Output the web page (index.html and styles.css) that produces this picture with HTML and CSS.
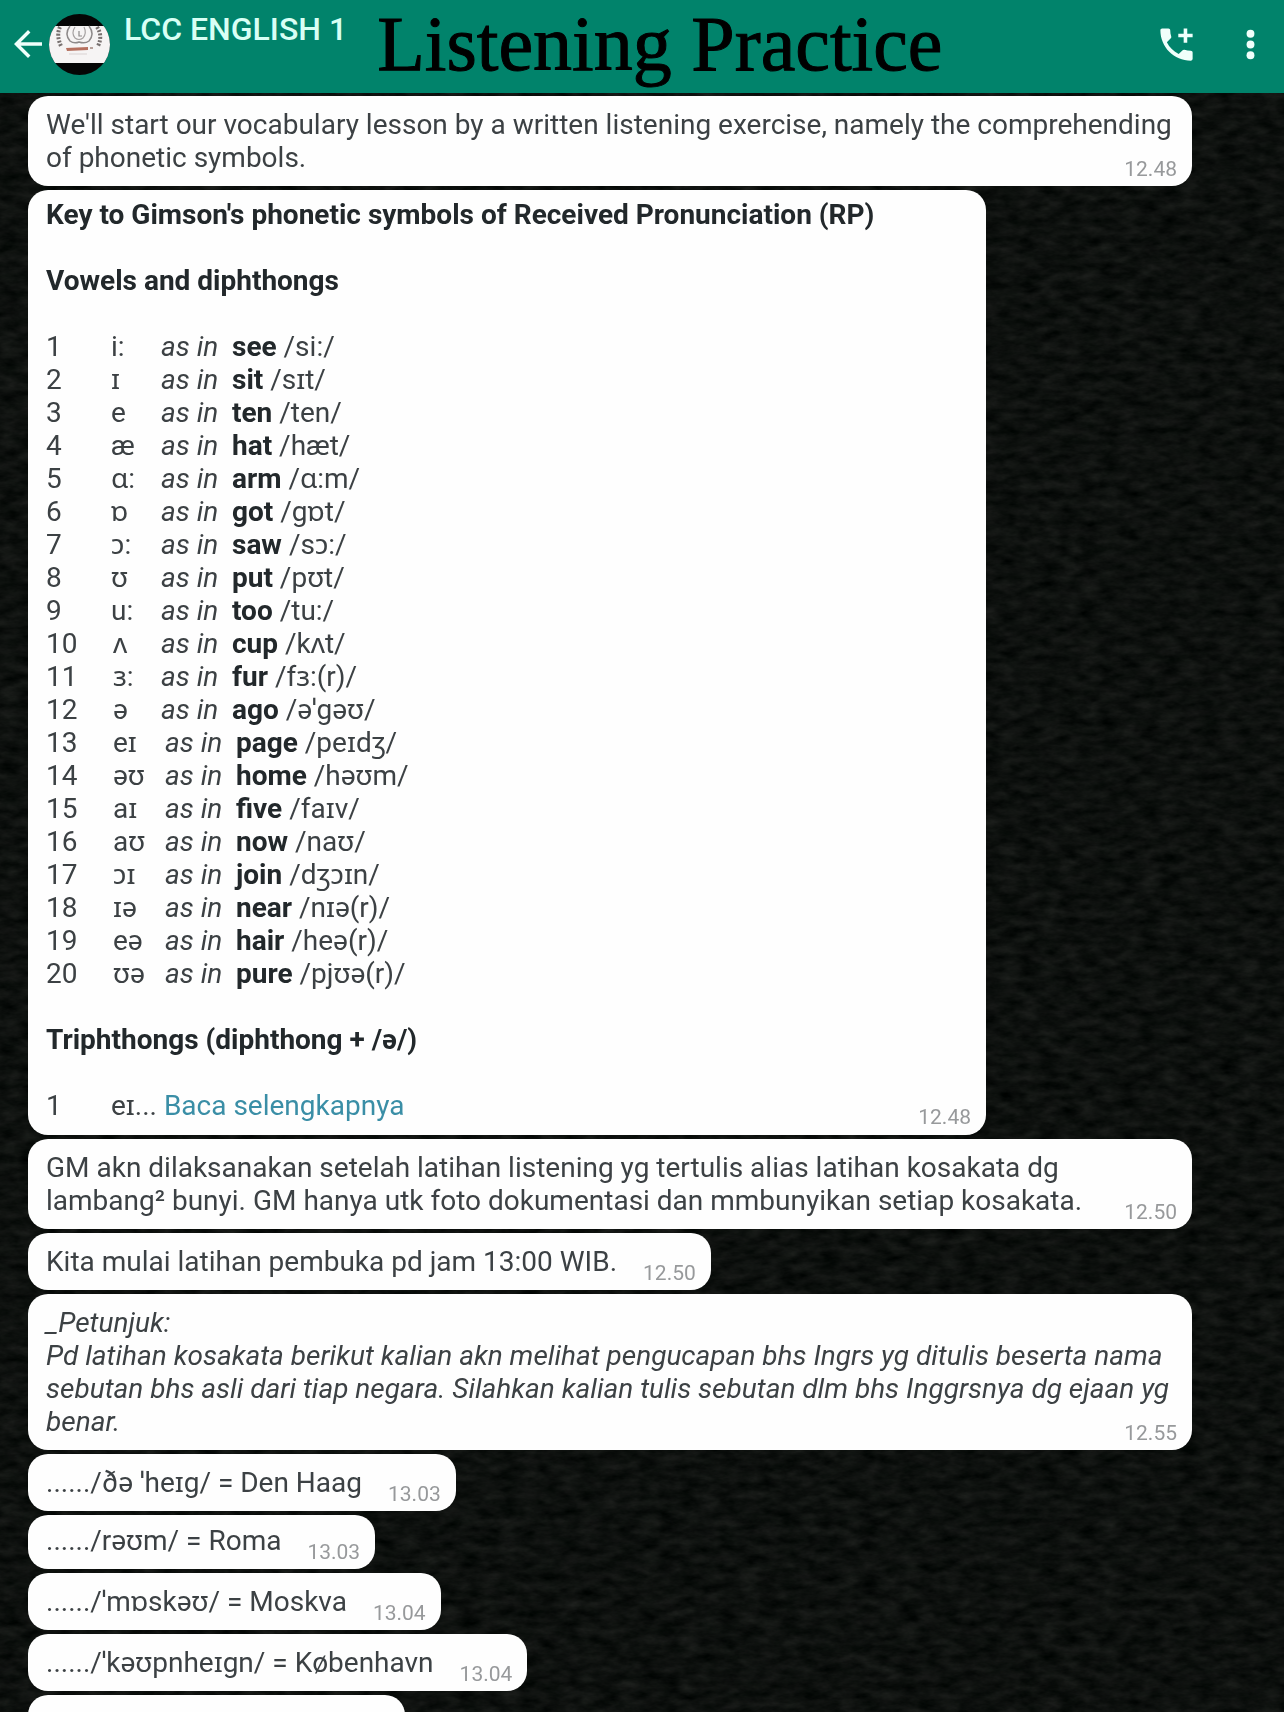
FILE: index.html
```
<!DOCTYPE html>
<html lang="id">
<head>
<meta charset="utf-8">
<title>Listening Practice</title>
<meta name="viewport" content="width=device-width, initial-scale=1">
<link rel="stylesheet" href="styles.css">
</head>
<body>
<svg class="wallpaper" aria-hidden="true">
  <filter id="grain" x="0" y="0" width="100%" height="100%" color-interpolation-filters="sRGB">
    <feTurbulence type="fractalNoise" baseFrequency="0.05 0.11" numOctaves="4" seed="8"/>
    <feColorMatrix values="0.13 0.03 0 0 -0.028  0.12 0.04 0 0 -0.016  0.12 0.03 0 0 -0.02  0 0 0 0 1"/>
  </filter>
  <rect width="100%" height="100%" filter="url(#grain)"/>
</svg>

<header class="bar">
  <button class="icon-btn back" aria-label="Kembali">
    <svg viewBox="0 0 24 24"><path d="M20 11H7.800l5.600-5.600L12 4l-8 8 8 8 1.400-1.400L7.800 13H20z"/></svg>
  </button>
  <svg class="avatar" viewBox="0 0 61 61" aria-hidden="true">
    <defs><clipPath id="disc"><circle cx="30.500" cy="30.500" r="30.500"/></clipPath></defs>
    <g clip-path="url(#disc)">
      <rect width="61" height="61" fill="#050505"/>
      <rect y="12" width="61" height="37" fill="#f6f4f4"/>
      <g fill="none" stroke="#8d8989">
        <path d="M21 12q-6 8 0 15 4 3 9 1 6 2 10-1 6-7 0-15" stroke-width="1.500"/>
        <path d="M26 13q-4 6 0 11 4 3 8 0 4-5 1-11" stroke="#a5a1a1" stroke-width="1.200"/>
        <path d="M30 17v5h3" stroke-width="1.200"/>
        <path d="M11 13q-4 8 1 19" stroke="#77706f" stroke-width="4" stroke-dasharray="2 1.500"/>
        <path d="M48 13q6 9 1 19" stroke="#77706f" stroke-width="4" stroke-dasharray="2 1.500"/>
      </g>
      <path d="M17 34l22-1v3l-21 1z" fill="#b5705f"/>
      <path d="M41 34h3" stroke="#b5a09a" stroke-width="2"/>
      <path d="M20 40h18" stroke="#d9d2d2"/>
    </g>
  </svg>
  <h2 class="group">LCC ENGLISH 1</h2>
  <h1 class="title">Listening Practice</h1>
  <div class="actions">
    <button class="icon-btn" aria-label="Panggilan grup">
      <svg viewBox="0 0 24 24"><path d="M20 15.500c-1.250 0-2.450-.2-3.570-.57-.1-.03-.21-.05-.31-.05-.26 0-.51.1-.71.29l-2.200 2.200c-2.830-1.440-5.150-3.750-6.590-6.590l2.200-2.210c.28-.26.36-.65.25-1C8.700 6.450 8.500 5.250 8.500 4c0-.55-.45-1-1-1H4c-.55 0-1 .45-1 1 0 9.390 7.610 17 17 17 .55 0 1-.45 1-1v-3.500c0-.55-.45-1-1-1zM21 6h-3V3h-2v3h-3v2h3v3h2V8h3z"/></svg>
    </button>
    <button class="icon-btn" aria-label="Menu">
      <svg viewBox="0 0 24 24"><circle cx="12" cy="6" r="2.200"/><circle cx="12" cy="12" r="2.200"/><circle cx="12" cy="18" r="2.200"/></svg>
    </button>
  </div>
</header>

<main class="chat">
  <article class="bubble wide">
    <p>We'll start our vocabulary lesson by a written listening exercise, namely the comprehending of phonetic symbols.</p>
    <time>12.48</time>
  </article>

  <article class="bubble key">
    <div>
      <h3>Key to Gimson's phonetic symbols of Received Pronunciation (RP)</h3>
      <h3>Vowels and diphthongs</h3>
      <table>
        <tbody>
          <tr><td>1</td><td>i:</td><td><i>as in</i></td><td><b>see</b> /si:/</td></tr>
          <tr><td>2</td><td>ɪ</td><td><i>as in</i></td><td><b>sit</b> /sɪt/</td></tr>
          <tr><td>3</td><td>e</td><td><i>as in</i></td><td><b>ten</b> /ten/</td></tr>
          <tr><td>4</td><td>æ</td><td><i>as in</i></td><td><b>hat</b> /hæt/</td></tr>
          <tr><td>5</td><td>ɑ:</td><td><i>as in</i></td><td><b>arm</b> /ɑ:m/</td></tr>
          <tr><td>6</td><td>ɒ</td><td><i>as in</i></td><td><b>got</b> /gɒt/</td></tr>
          <tr><td>7</td><td>ɔ:</td><td><i>as in</i></td><td><b>saw</b> /sɔ:/</td></tr>
          <tr><td>8</td><td>ʊ</td><td><i>as in</i></td><td><b>put</b> /pʊt/</td></tr>
          <tr><td>9</td><td>u:</td><td><i>as in</i></td><td><b>too</b> /tu:/</td></tr>
          <tr><td>10</td><td>ʌ</td><td><i>as in</i></td><td><b>cup</b> /kʌt/</td></tr>
          <tr><td>11</td><td>ɜ:</td><td><i>as in</i></td><td><b>fur</b> /fɜ:(r)/</td></tr>
          <tr><td>12</td><td>ə</td><td><i>as in</i></td><td><b>ago</b> /əˈgəʊ/</td></tr>
        </tbody>
      </table>
      <table class="diphthongs">
        <tbody>
          <tr><td>13</td><td>eɪ</td><td><i>as in</i></td><td><b>page</b> /peɪdʒ/</td></tr>
          <tr><td>14</td><td>əʊ</td><td><i>as in</i></td><td><b>home</b> /həʊm/</td></tr>
          <tr><td>15</td><td>aɪ</td><td><i>as in</i></td><td><b>five</b> /faɪv/</td></tr>
          <tr><td>16</td><td>aʊ</td><td><i>as in</i></td><td><b>now</b> /naʊ/</td></tr>
          <tr><td>17</td><td>ɔɪ</td><td><i>as in</i></td><td><b>join</b> /dʒɔɪn/</td></tr>
          <tr><td>18</td><td>ɪə</td><td><i>as in</i></td><td><b>near</b> /nɪə(r)/</td></tr>
          <tr><td>19</td><td>eə</td><td><i>as in</i></td><td><b>hair</b> /heə(r)/</td></tr>
          <tr><td>20</td><td>ʊə</td><td><i>as in</i></td><td><b>pure</b> /pjʊə(r)/</td></tr>
        </tbody>
      </table>
      <h3 class="spaced">Triphthongs (diphthong + /ə/)</h3>
      <p class="entry"><span class="num">1</span><span>eɪ... <a href="#more">Baca selengkapnya</a></span></p>
    </div>
    <time>12.48</time>
  </article>

  <article class="bubble wide">
    <p>GM akn dilaksanakan setelah latihan listening yg tertulis alias latihan kosakata dg<br>lambang² bunyi. GM hanya utk foto dokumentasi dan mmbunyikan setiap kosakata.</p>
    <time>12.50</time>
  </article>

  <article class="bubble short">
    <p>Kita mulai latihan pembuka pd jam 13:00 WIB.</p>
    <time>12.50</time>
  </article>

  <article class="bubble wide">
    <p><i>_Petunjuk:<br>Pd latihan kosakata berikut kalian akn melihat pengucapan bhs Ingrs yg ditulis beserta nama sebutan bhs asli dari tiap negara. Silahkan kalian tulis sebutan dlm bhs Inggrsnya dg ejaan yg benar.</i></p>
    <time>12.55</time>
  </article>

  <article class="bubble short">
    <p>....../ðə ˈheɪg/ = Den Haag</p>
    <time>13.03</time>
  </article>
  <article class="bubble short tight">
    <p>....../rəʊm/ = Roma</p>
    <time>13.03</time>
  </article>
  <article class="bubble short">
    <p>....../ˈmɒskəʊ/ = Moskva</p>
    <time>13.04</time>
  </article>
  <article class="bubble short">
    <p>....../ˈkəʊpnheɪgn/ = København</p>
    <time>13.04</time>
  </article>
  <article class="bubble next"></article>
</main>
</body>
</html>
```
FILE: styles.css
```
* {
  box-sizing: border-box;
}

body {
  margin: 0;
  height: 100vh;
  overflow: hidden;
  background: #0c100f;
  color: #3c4144;
  font: 28px/33px Roboto, "Noto Sans", "DejaVu Sans", sans-serif;
}

h1, h2, h3, p {
  margin: 0;
}

/* Grainy dark chat wallpaper behind everything */
.wallpaper {
  position: fixed;
  inset: 0;
  width: 100%;
  height: 100%;
  z-index: -1;
}

/* Top bar */
.bar {
  display: flex;
  align-items: center;
  height: 93px;
  padding: 0 12px 5px 7px;
  background: #01836b;
}

.icon-btn {
  padding: 0;
  border: 0;
  background: none;
  color: #f0fffb;
}

.icon-btn svg {
  display: block;
  width: 43px;
  height: 43px;
  fill: currentColor;
}

.back svg {
  width: 42px;
  height: 42px;
}

.avatar {
  flex: none;
  width: 61px;
  height: 61px;
}

.group {
  align-self: flex-start;
  margin: 10px 30px 0 14px;
  color: #d8fff5;
  font-size: 32px;
  line-height: 38px;
  font-weight: 500;
  white-space: nowrap;
}

.title {
  color: #000;
  font: 78px/86px "Liberation Serif", serif;
  -webkit-text-stroke: 1px #000;
  white-space: nowrap;
}

.actions {
  display: flex;
  gap: 31px;
  margin-left: auto;
}

/* Messages */
.chat {
  display: flex;
  flex-direction: column;
  align-items: flex-start;
  gap: 4px;
  padding: 3px 92px 0 28px;
}

.bubble {
  flex: none;
  max-width: 100%;
  padding: 12px 15px 12px 18px;
  border-radius: 20px;
  background: #fefefe;
}

.wide, .key {
  display: grid;
  width: 100%;
}

.wide > *, .key > * {
  grid-area: 1 / 1;
}

.key {
  max-width: 958px;
  padding-top: 8px;
  padding-bottom: 13px;
}

.short {
  display: flex;
  gap: 26px;
}

.tight {
  padding-top: 9px;
}

.next {
  width: 377px;
  height: 57px;
}

time {
  align-self: end;
  justify-self: end;
  margin-bottom: -7px;
  color: #97999b;
  font-size: 21px;
  line-height: 24px;
}

h3 {
  margin-bottom: 33px;
  color: #22282b;
  font-size: 28px;
  line-height: 33px;
  font-weight: 700;
}

.spaced {
  margin-top: 33px;
}

b {
  color: #22282b;
}

table {
  border-collapse: collapse;
}

td {
  height: 33px;
  padding: 0;
  white-space: nowrap;
}

td:nth-child(1) { width: 65px; }
td:nth-child(2) { width: 50px; }
td:nth-child(3) { width: 71px; }

/* Two-digit rows start their symbol a little further right */
tr:nth-child(n+10) td:nth-child(2) { padding-left: 2px; }

.diphthongs td:nth-child(1) { width: 67px; }
.diphthongs td:nth-child(2) { width: 52px; }

.entry {
  display: flex;
}

.num {
  width: 65px;
}

a {
  color: #3a8ea6;
  text-decoration: none;
}
```
